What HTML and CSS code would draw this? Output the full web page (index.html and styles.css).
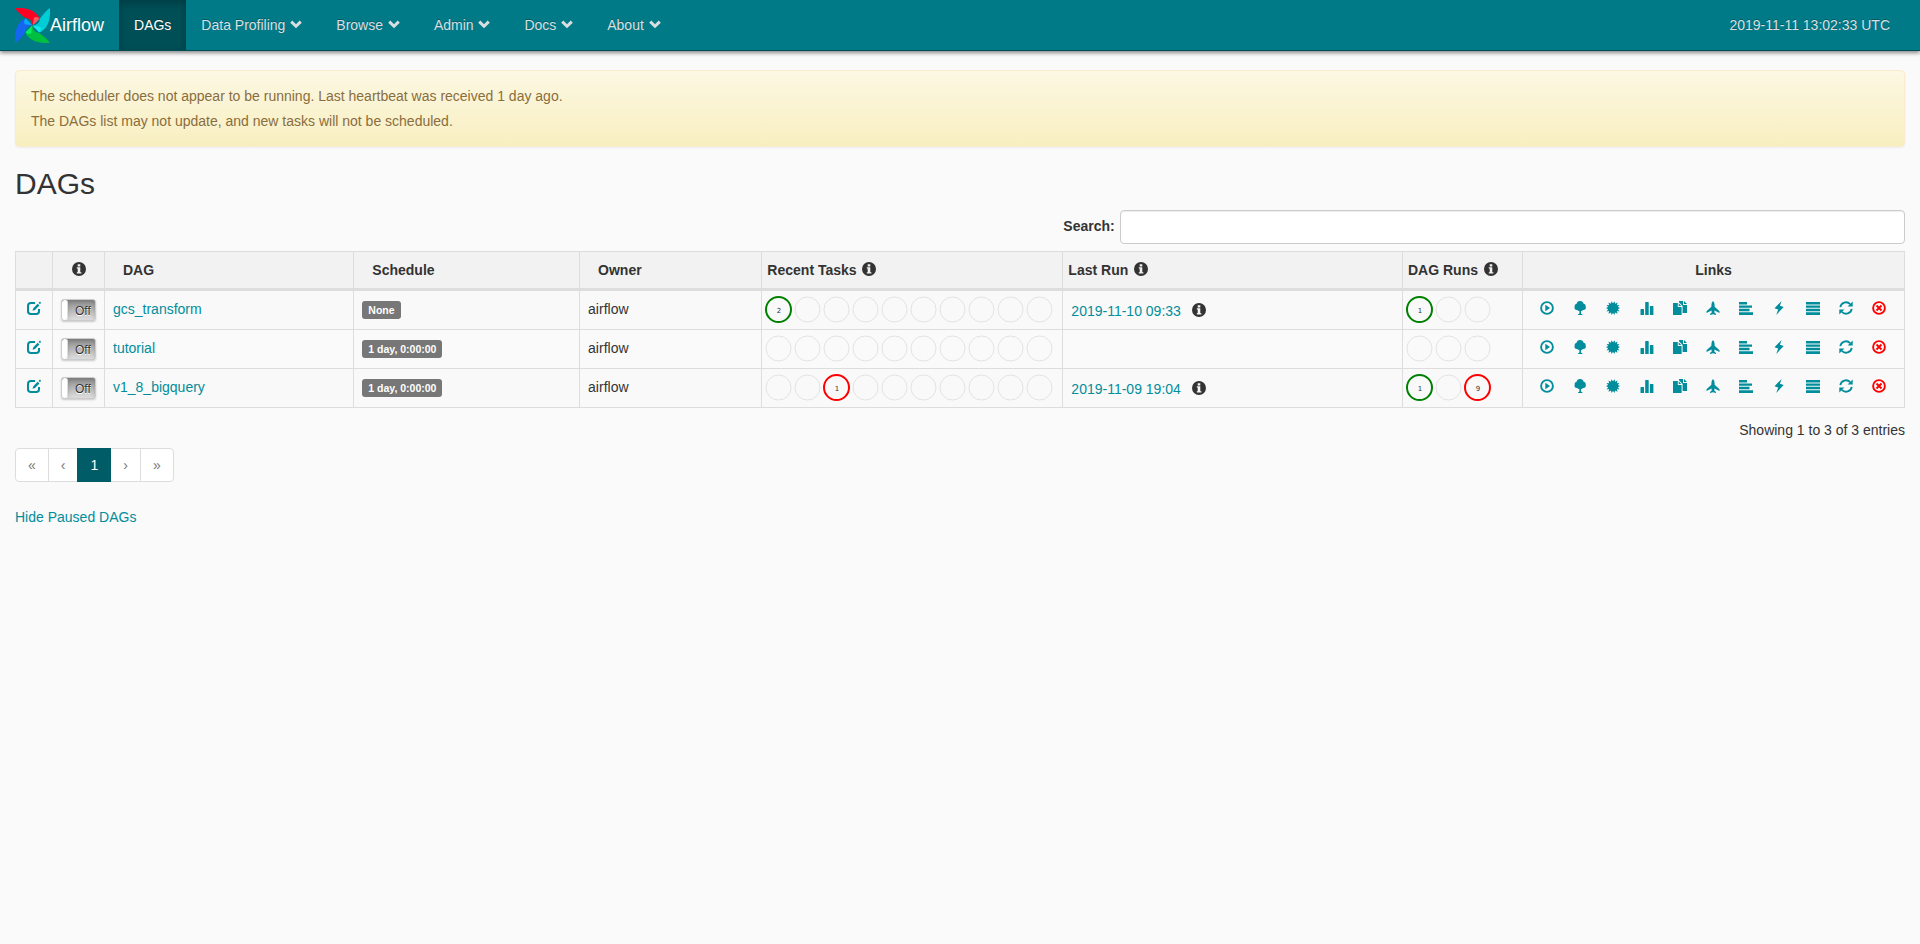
FILE: index.html
```html
<!DOCTYPE html>
<html lang="en">
<head>
<meta charset="utf-8">
<title>Airflow - DAGs</title>
<link rel="stylesheet" href="styles.css">
</head>
<body>
<svg class="sprite" aria-hidden="true">
  <symbol id="i-chevron" viewBox="0 0 14 14"><path d="M1.2 5.7 3.3 3.6 7 7.2 10.7 3.6 12.8 5.7 7 11.3Z"/></symbol>
  <symbol id="i-info" viewBox="0 0 14 14"><path fill-rule="evenodd" d="M7 0a7 7 0 1 1 0 14A7 7 0 0 1 7 0ZM5.7 2.2V4.4H8.3V2.2ZM4.8 5.3V6.4H5.7V10.2H4.8V11.6H9.4V10.2H8.3V5.3Z"/></symbol>
  <symbol id="i-edit" viewBox="0 0 14 14"><path fill="none" stroke="currentColor" stroke-width="2" d="M8 2H4Q1 2 1 5v5.2Q1 13 4 13h5.200q2.800 0 2.800-2.800V8"/><path d="M5.500 9.700 6.300 7.200 10.700 2.800 12.400 4.500 8 8.900ZM11.500 2 13 .5 14 1.800 13.100 3.300Z"/></symbol>
  <symbol id="i-play" viewBox="0 0 14 14"><circle cx="7" cy="7" r="5.9" fill="none" stroke="currentColor" stroke-width="1.9"/><path d="M5.3 3.8 10 7 5.3 10.2Z"/></symbol>
  <symbol id="i-tree" viewBox="0 0 14 14"><path d="M7 0C9 0 10.5 1.2 10.6 2.7 12 2.9 13 4.2 12.700 5.700 13.500 7.500 12 9.200 10 9 9.300 9.800 8.600 10 8 9.900V12.600L9.500 13.400V14H5V13.400L6.400 12.600V9.900C5.500 10 4.800 9.700 4.300 9 2.300 9.300 .9 7.500 1.700 5.700 1.300 4.300 2.200 3 3.600 2.700 3.800 1.200 5 0 7 0Z"/></symbol>
  <symbol id="i-cert" viewBox="0 0 14 14"><path d="M7 2.3 8.700 .2 9 2.700 11.500 1.500 10.900 4.200 13.400 4 11.900 6 14 7 11.900 8.200 13.400 10.400 10.900 10.100 11.500 12.700 9 11.600 8.600 13.900 7 12 5.400 13.900 5 11.600 2.500 12.700 3.100 10.100 .6 10.400 2.100 8.200 0 7 2.100 6 .6 4 3.100 4.200 2.500 1.500 5 2.700 5.300 .2Z"/></symbol>
  <symbol id="i-bars" viewBox="0 0 14 14"><path d="M.5 8.500Q.5 8 1 8H3.500Q4 8 4 8.500V14H.5ZM5.200 1.500Q5.200 1 5.700 1H8.200Q8.700 1 8.700 1.500V14H5.200ZM9.900 5.500Q9.900 5 10.400 5H12.900Q13.400 5 13.400 5.500V14H9.900Z"/></symbol>
  <symbol id="i-copy" viewBox="0 0 14 14"><path d="M0 2H4.800V6H8.600V14H0ZM5.700 2.300 8.300 5H5.700ZM6 0H10V4H14V12H9.600V5L6 1.300ZM11 0 14 3H11Z"/></symbol>
  <symbol id="i-plane" viewBox="0 0 14 14"><path d="M7 0Q8.600 1.500 8.600 4V5.800L13.500 10.200V12L8.500 9.500 8.300 11.500 10 13V14L7 13.200 4 14V13L5.700 11.500 5.500 9.500 .5 12V10.200L5.400 5.800V4Q5.400 1.500 7 0Z"/></symbol>
  <symbol id="i-align" viewBox="0 0 14 14"><path d="M0 1H8V3.600H0ZM0 4.400H13V6.800H0ZM0 7.800H10.500V10.200H0ZM0 11.200H14V14H0Z"/></symbol>
  <symbol id="i-flash" viewBox="0 0 14 14"><path d="M9.600 0 7.900 4.800 11.700 6.100 4.200 14 6.200 8.600 2.500 7.200Z"/></symbol>
  <symbol id="i-list" viewBox="0 0 14 14"><path d="M0 1H14V3.600H0ZM0 4.500H14V6.800H0ZM0 7.800H14V10.200H0ZM0 11.200H14V14H0Z"/></symbol>
  <symbol id="i-refresh" viewBox="0 0 14 14"><path fill="none" stroke="currentColor" stroke-width="1.800" d="M1.300 6.200A5.700 5.700 0 0 1 11.100 3.100M12.700 7.800A5.700 5.700 0 0 1 2.900 10.900"/><path d="M13.700 .4V5.400H8.600ZM.3 13.600V8.600H5.400Z"/></symbol>
  <symbol id="i-remove" viewBox="0 0 14 14"><circle cx="7" cy="7" r="5.9" fill="none" stroke="currentColor" stroke-width="1.9"/><path fill="none" stroke="currentColor" stroke-width="1.9" d="M4.500 4.500 9.500 9.500M9.500 4.500 4.500 9.500"/></symbol>
</svg>

<nav class="navbar">
  <a class="brand" href="#">
    <svg class="logo" viewBox="0 0 104 104" aria-hidden="true">
      <defs>
        <path id="wing" d="M0 0C38-2 60 8 72 28L53 53C50 38 44 31 32 30C20 22 8 12 0 0Z"/>
        <path id="fold" d="M53 51L56 29Q66 24 73 32Z"/>
      </defs>
      <use href="#wing" fill="#ff0022"/>
      <use href="#wing" fill="#00cdd6" transform="rotate(90 52 52)"/>
      <use href="#wing" fill="#00bf3f" transform="rotate(180 52 52)"/>
      <use href="#wing" fill="#1466f0" transform="rotate(270 52 52)"/>
      <use href="#fold" fill="#ff5661"/>
      <use href="#fold" fill="#11eaea" transform="rotate(90 52 52)"/>
      <use href="#fold" fill="#00f060" transform="rotate(180 52 52)"/>
      <use href="#fold" fill="#08a9ff" transform="rotate(270 52 52)"/>
    </svg>
    <span>Airflow</span>
  </a>
  <ul class="menu">
    <li><a class="active" href="#">DAGs</a></li>
    <li><a href="#">Data Profiling <svg class="icon caret"><use href="#i-chevron"/></svg></a></li>
    <li><a href="#">Browse <svg class="icon caret"><use href="#i-chevron"/></svg></a></li>
    <li><a href="#">Admin <svg class="icon caret"><use href="#i-chevron"/></svg></a></li>
    <li><a href="#">Docs <svg class="icon caret"><use href="#i-chevron"/></svg></a></li>
    <li><a href="#">About <svg class="icon caret"><use href="#i-chevron"/></svg></a></li>
  </ul>
  <a class="clock" href="#">2019-11-11 13:02:33 UTC</a>
</nav>

<main class="container">
  <div class="alert" role="alert">
    <p>The scheduler does not appear to be running. Last heartbeat was received 1 day ago.</p>
    <p>The DAGs list may not update, and new tasks will not be scheduled.</p>
  </div>

  <h2>DAGs</h2>

  <div class="search">
    <label for="dag-search">Search:</label>
    <input id="dag-search" type="search">
  </div>

  <table class="dags">
    <colgroup>
      <col class="c-edit"><col class="c-toggle"><col class="c-dag"><col class="c-schedule"><col class="c-owner"><col class="c-tasks"><col><col class="c-runs"><col class="c-links">
    </colgroup>
    <thead>
      <tr>
        <th></th>
        <th class="center"><svg class="icon"><use href="#i-info"/></svg></th>
        <th class="sortable">DAG</th>
        <th class="sortable">Schedule</th>
        <th class="sortable">Owner</th>
        <th class="hinted">Recent Tasks <svg class="icon"><use href="#i-info"/></svg></th>
        <th class="hinted">Last Run <svg class="icon"><use href="#i-info"/></svg></th>
        <th class="hinted">DAG Runs <svg class="icon"><use href="#i-info"/></svg></th>
        <th class="center">Links</th>
      </tr>
    </thead>
    <tbody id="dag-rows"></tbody>
  </table>

  <p class="summary">Showing 1 to 3 of 3 entries</p>

  <ul class="pagination">
    <li><a href="#">«</a></li>
    <li><a href="#">‹</a></li>
    <li><a class="current" href="#">1</a></li>
    <li><a href="#">›</a></li>
    <li><a href="#">»</a></li>
  </ul>

  <a class="hide-paused" href="#">Hide Paused DAGs</a>
</main>
<script src="dags.js"></script>
</body>
</html>
```

FILE: styles.css
```css
* { box-sizing: border-box; }

body {
  margin: 0;
  background: #fafafa;
  color: #333;
  font: 14px/20px "Liberation Sans", Arial, sans-serif;
}

a { color: #018d9c; text-decoration: none; }
p, ul { margin: 0; padding: 0; }
ul { list-style: none; }

.sprite { display: none; }
.icon {
  display: inline-block;
  width: 14px;
  height: 14px;
  fill: currentColor;
  vertical-align: -1px;
}

/* Navigation bar */
.navbar {
  display: flex;
  height: 51px;
  padding: 0 15px;
  background: #007a87;
  border-bottom: 1px solid #004d55;
  box-shadow: 0 2px 4px rgba(0, 0, 0, .45);
  text-shadow: 0 -1px 0 rgba(0, 0, 0, .25);
}
.brand {
  display: flex;
  align-items: center;
  margin-right: 15px;
  color: #fff;
  font-size: 18px;
}
.logo { width: 35px; height: 35px; }
.menu { display: flex; }
.menu a, .clock {
  display: block;
  height: 50px;
  padding: 15px;
  color: #d9dfe0;
}
.menu .active {
  background: #004f57;
  box-shadow: inset 0 3px 9px rgba(0, 0, 0, .25);
  color: #fff;
}
.caret { margin-right: 3px; }
.clock { margin-left: auto; }

.container { padding: 19px 15px; }

.alert {
  display: flex;
  flex-direction: column;
  gap: 5px;
  padding: 15px;
  border: 1px solid #faebcc;
  border-radius: 4px;
  background: linear-gradient(#fcf8e3, #f8efc0);
  box-shadow: 0 1px 2px rgba(0, 0, 0, .05);
  color: #8a6d3b;
  text-shadow: 0 1px 0 rgba(255, 255, 255, .2);
}

h2 {
  margin: 20px 0 10px;
  font-size: 30px;
  font-weight: 400;
  line-height: 33px;
}

.search {
  display: flex;
  justify-content: flex-end;
  gap: 5px;
  margin-bottom: 7px;
}
.search label { font-weight: 700; line-height: 32px; }
.search input {
  width: 41.55%;
  height: 34px;
  padding: 6px 12px;
  border: 1px solid #ccc;
  border-radius: 4px;
  background: #fff;
  box-shadow: inset 0 1px 1px rgba(0, 0, 0, .075);
  font: inherit;
  appearance: none;
}

/* DAG table */
.dags {
  width: 100%;
  table-layout: fixed;
  border-collapse: collapse;
}
.c-edit { width: 37px; }
.c-toggle { width: 52px; }
.c-dag { width: 13.2%; }
.c-schedule { width: 11.95%; }
.c-owner { width: 9.65%; }
.c-tasks { width: 301px; }
.c-runs { width: 120px; }
.c-links { width: 382px; }

.dags th, .dags td { border: 1px solid #ddd; text-align: left; }
.dags th {
  height: 38px;
  padding: 0 5px;
  border-bottom-width: 3px;
  background: #f2f2f2;
}
.dags th.sortable { padding-left: 18px; }
.dags td { height: 39px; padding: 8px; vertical-align: top; }
.dags tbody tr:nth-child(odd) { background: #f9f9f9; }
.dags th.center, .dags td.center { text-align: center; padding-left: 0; padding-right: 0; }
.dags td.states { padding: 5px 3px; }
.dags td.last-run { padding-top: 10px; padding-bottom: 0; }
.hinted .icon { margin-left: 2px; }
.last-run .icon { margin-left: 7px; }

.label {
  display: inline-block;
  padding: 0 6px;
  border-radius: 3px;
  background: #777;
  color: #fff;
  font-size: 75%;
  font-weight: 700;
  line-height: 18px;
}

.toggle {
  position: relative;
  display: flex;
  width: 35px;
  height: 22px;
  margin: 0 auto;
  border: 1px solid #ccc;
  border-radius: 3px;
  background: linear-gradient(#8c8c8c, #e0e0e0);
  box-shadow: 0 1px 2px rgba(0, 0, 0, .2);
  overflow: hidden;
}
.toggle input {
  position: absolute;
  inset: 0;
  margin: 0;
  opacity: 0;
}
.handle {
  width: 6px;
  border-right: 1px solid #ddd;
  border-radius: 3px;
  background: #fff;
}
.off {
  flex: 1;
  padding-left: 7px;
  box-shadow: inset 0 2px 4px rgba(0, 0, 0, .15);
  font-size: 12px;
  line-height: 22px;
  text-align: left;
  text-shadow: 0 1px 0 #fff;
}

.state-list { display: flex; gap: 2px; }
.state { width: 27px; height: 27px; }
.state circle { fill: none; stroke: #e3e3e3; }
.state text {
  fill: #333;
  font: 7px "DejaVu Sans", sans-serif;
  text-anchor: middle;
}
.state.success circle { stroke: #008000; stroke-width: 2; }
.state.failed circle { stroke: #f00; stroke-width: 2; }

.link-list { display: flex; justify-content: space-between; padding: 0 10px 0 9px; }
.link-list .danger { color: #f00; }

.summary { margin-top: 12px; text-align: right; }

.pagination { display: flex; margin: 8px 0 25px; }
.pagination a {
  display: block;
  padding: 6px 12px;
  margin-left: -1px;
  border: 1px solid #ddd;
  background: #fff;
  color: #777;
}
.pagination li:first-child a { margin-left: 0; border-radius: 4px 0 0 4px; }
.pagination li:last-child a { border-radius: 0 4px 4px 0; }
.pagination .current {
  position: relative;
  border-color: #005c66;
  background: #005c66;
  color: #fff;
}
```

FILE: dags.js
```js
const dags = [
  { id: "gcs_transform", schedule: "None", owner: "airflow", lastRun: "2019-11-10 09:33",
    tasks: { 0: ["success", 2] }, runs: { 0: ["success", 1] } },
  { id: "tutorial", schedule: "1 day, 0:00:00", owner: "airflow", lastRun: "",
    tasks: {}, runs: {} },
  { id: "v1_8_bigquery", schedule: "1 day, 0:00:00", owner: "airflow", lastRun: "2019-11-09 19:04",
    tasks: { 2: ["failed", 1] }, runs: { 0: ["success", 1], 2: ["failed", 9] } }
];

const links = [
  ["play", "Trigger Dag"], ["tree", "Tree View"], ["cert", "Graph View"],
  ["bars", "Tasks Duration"], ["copy", "Task Tries"], ["plane", "Landing Times"],
  ["align", "Gantt View"], ["flash", "Code View"], ["list", "Logs"],
  ["refresh", "Refresh"], ["remove", "Delete Dag"]
];

const icon = name => `<svg class="icon"><use href="#i-${name}"/></svg>`;

const states = (count, filled) => {
  let out = "";
  for (let i = 0; i < count; i++) {
    const [kind, value] = filled[i] || ["", ""];
    out += `<svg class="state ${kind}" viewBox="0 0 27 27"><circle cx="13.5" cy="13.5" r="12.5"/>` +
      (value ? `<text x="14" y="17">${value}</text>` : "") + `</svg>`;
  }
  return `<div class="state-list">${out}</div>`;
};

document.getElementById("dag-rows").innerHTML = dags.map(dag => `
  <tr>
    <td class="center"><a href="#" aria-label="Edit ${dag.id}">${icon("edit")}</a></td>
    <td class="center"><label class="toggle"><input type="checkbox" aria-label="Enable ${dag.id}"><span class="handle"></span><span class="off">Off</span></label></td>
    <td><a href="#">${dag.id}</a></td>
    <td><span class="label">${dag.schedule}</span></td>
    <td>${dag.owner}</td>
    <td class="states">${states(10, dag.tasks)}</td>
    <td class="last-run">${dag.lastRun ? `<a href="#">${dag.lastRun}</a> ${icon("info")}` : ""}</td>
    <td class="states">${states(3, dag.runs)}</td>
    <td><div class="link-list">${links.map(([name, title]) =>
      `<a href="#" aria-label="${title}"${name === "remove" ? ' class="danger"' : ""}>${icon(name)}</a>`).join("")}</div></td>
  </tr>`).join("");
```
